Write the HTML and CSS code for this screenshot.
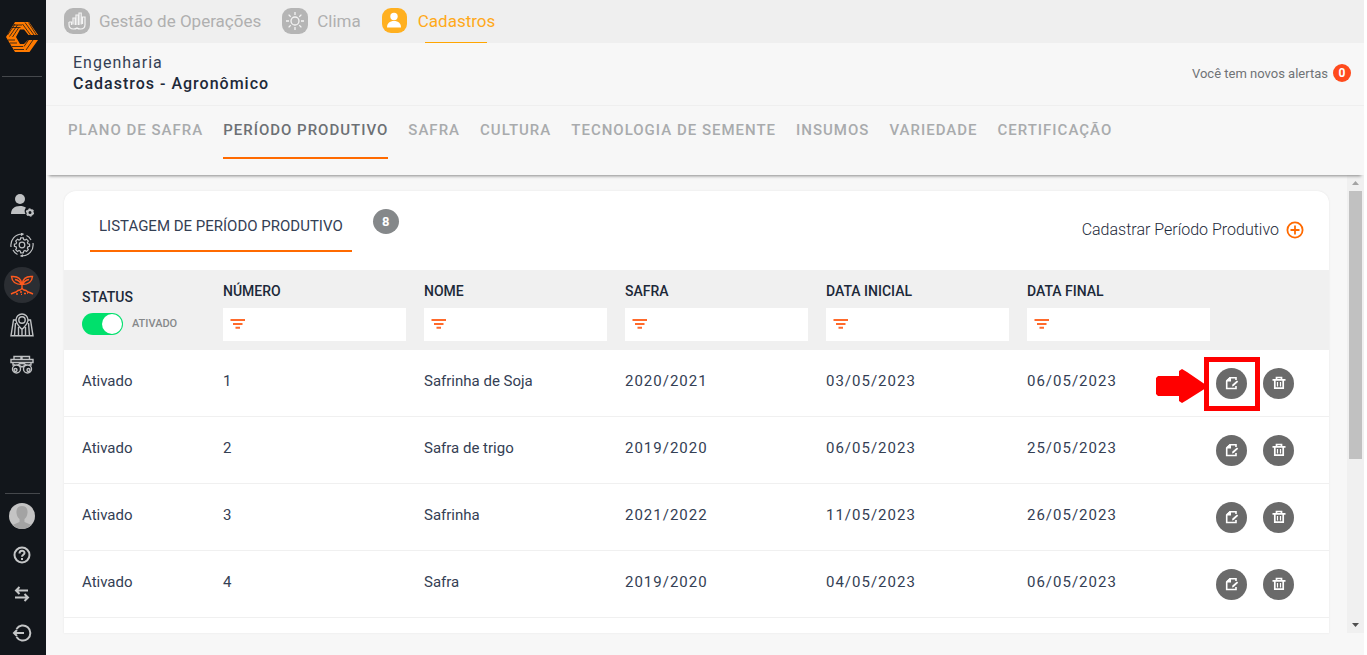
FILE: index.html
```html
<!DOCTYPE html>
<html lang="pt-BR">
<head>
    <meta charset="UTF-8">
    <meta name="viewport" content="width=device-width, initial-scale=1.0">
    <title>Cadastros - Agronômico</title>
    <link rel="stylesheet" href="styles.css">
</head>
<body>
    <!-- icones reutilizados na tabela -->
    <svg class="sprite" aria-hidden="true">
        <symbol id="icon-filter" viewBox="0 0 16 12">
            <path d="M0.500 2h14.500M3 6h9.500M5.500 9.800h4.500" fill="none" stroke="#ff6a2b" stroke-width="2"/>
        </symbol>
        <symbol id="icon-edit" viewBox="0 0 14 14">
            <path d="M11 4V1.700H5L1.700 5v7.500H11V10" fill="none" stroke="#fff" stroke-width="1.600"/>
            <path d="M1.500 5.500V4L5 1h1v4.500z" fill="#fff"/>
            <path d="M7 10.500l.4-2L12 4.500l1.200 1.200-4.500 4.300z" fill="#fff"/>
        </symbol>
        <symbol id="icon-trash" viewBox="0 0 14 14">
            <path d="M0.500 3.800h13M4.500 3.500V1.500h5v2M2.800 4v8.200h8.400V4" fill="none" stroke="#fff" stroke-width="1.700"/>
            <path d="M5.500 6v4.500M8.500 6v4.500" fill="none" stroke="#fff" stroke-width="1.200"/>
        </symbol>
    </svg>
    <div class="app">
        <aside class="sidebar">
            <a href="#" class="logo" aria-label="Início">
                <svg width="32" height="30" viewBox="0 0 32 30">
                    <path d="M9 0h14l9 13h-9.500L18 7.500h-4L10 15l4 7h4l4-4h10l-8.500 12H9L0 15z" fill="#ff7a00"/>
                    <path d="M7 3h9M5.500 5.500h9M19 .5l9 12.500M22.500 .5l8 12.500M16.500 2l8 11M1.500 13l7.500-11M3.500 14.500l8-11.500M6.500 15l6-9M2 18h7M4 21h7M6 24.500h11M8 27.500h10M18 24.500l4.500-6.500M20 28l7-10" fill="none" stroke="#12161b" stroke-width=".8"/>
                </svg>
            </a>
            <nav class="sideMenu">
                <a href="#" aria-label="Usuários">
                    <svg width="24" height="24" viewBox="0 0 24 24" fill="#bfc1c3">
                        <circle cx="10" cy="6" r="5"/>
                        <path d="M1 21c0-5 3-8 9-8 2.500 0 4.500.6 6 1.700-1.500 1.500-2 4-.5 6.300z"/>
                        <circle cx="20" cy="19.500" r="2.500" fill="none" stroke="#bfc1c3" stroke-width="2"/>
                        <circle cx="20" cy="19.500" r="3.600" fill="none" stroke="#bfc1c3" stroke-width="1.200" stroke-dasharray="1.900 1.870"/>
                    </svg>
                </a>
                <a href="#" aria-label="Processos">
                    <svg width="24" height="24" viewBox="0 0 24 24" fill="none" stroke="#bfc1c3" stroke-width="1.200">
                        <circle cx="12" cy="12" r="2.800"/>
                        <path d="M10.700 4.800h2.600l.4 1.700 1.300.6 1.500-.9 1.800 1.800-.9 1.500.5 1.300 1.700.4v2.100l-1.700.5-.5 1.300.9 1.500-1.800 1.800-1.500-.9-1.300.6-.4 1.700h-2.600l-.4-1.700-1.300-.6-1.500.9-1.800-1.800.9-1.500-.5-1.300-1.700-.5v-2.100l1.700-.4.5-1.300-.9-1.500L7.500 6.200l1.500.9 1.300-.6z"/>
                        <path d="M1 14C0 7 5 1 12.500 1M11 .2l2 .9-2 1.300M23 10c1 7-4 13-11.500 13M13 21.700l-2 1.200 2 1M3 17c1 2 2 3.500 4.500 4.500M21 7c-1-2-2-3.500-4.500-4.500"/>
                    </svg>
                </a>
                <a href="#" class="active" aria-label="Agronômico">
                    <svg width="24" height="20" viewBox="0 0 24 20" fill="none" stroke="#ff5a1f" stroke-width="1.400">
                        <path d="M12 14V9C11 3 7 1 1.500 1.500 2 7 5 9.500 12 9.500M12 9c1-6 5-8 10.500-7.500C22 7 19 9.500 12 9.500M5 4.500c3 .5 5 2 7 5 2-3 4-4.500 7-5"/>
                        <path d="M1 19c2-1 3-1.500 5-2l2-1.500 2-.5 2-1.500 2 1.500 2 .5 2 1.500c2 .5 3 1 5 2"/>
                        <path d="M6 19h2M10 17h2M14 18.500h2M17 18h1M11 19.500h1"/>
                    </svg>
                </a>
                <a href="#" aria-label="Mapas">
                    <svg width="24" height="24" viewBox="0 0 24 24" fill="none" stroke="#bfc1c3" stroke-width="1.400">
                        <path d="M5.500 7H3.500L1 22.800h22L20.500 7h-2M12 16.500C8 12.500 6 9.500 6 7a6 6 0 0 1 12 0c0 2.500-2 5.500-6 9.500zM12 17v5.500M8.500 14v8.500M15.500 14v8.500M5.500 10L4.500 22.500M18.500 10l1 12.500"/>
                        <circle cx="12" cy="7" r="3.200"/>
                    </svg>
                </a>
                <a href="#" aria-label="Máquinas">
                    <svg width="24" height="20" viewBox="0 0 24 20" fill="none" stroke="#bfc1c3" stroke-width="1.400">
                        <path d="M4 4V1.500h7V4M12 4V1.500h7.500V4M1 4.500h22v3H1zM3 8v2h2M21 8v2h-2M8 10c1.500-2 6.500-2 8 0l-4 2z"/>
                        <circle cx="6.500" cy="14" r="4"/><circle cx="17.500" cy="14" r="4"/>
                        <circle cx="5.500" cy="15" r="1.500"/><circle cx="18.500" cy="15" r="1.500"/>
                    </svg>
                </a>
            </nav>
            <nav class="sideFooter">
                <a href="#" aria-label="Perfil">
                    <svg width="26" height="26" viewBox="0 0 26 26">
                        <circle cx="13" cy="13" r="13" fill="#c4c4c4"/>
                        <path d="M13 3c-4 0-6 3-5.500 7 .3 3 1.500 5 3 6v3l-7 3c5 5.300 14 5.300 19 0l-7-3v-3c1.500-1 2.700-3 3-6C19 6 17 3 13 3z" fill="#a3a3a3"/>
                    </svg>
                </a>
                <a href="#" aria-label="Ajuda">
                    <svg width="18" height="18" viewBox="0 0 18 18" fill="none" stroke="#c4c6c7" stroke-width="2">
                        <circle cx="9" cy="9" r="7.500"/>
                        <path d="M6.500 7.500C6.500 4 11.500 4 11.500 7c0 1.700-2.500 1.800-2.500 3.700M9 12v2"/>
                    </svg>
                </a>
                <a href="#" aria-label="Trocar">
                    <svg width="16" height="16" viewBox="0 0 16 16" fill="none" stroke="#c4c6c7" stroke-width="2">
                        <path d="M14 4.500H2M5.500 1L2 4.500 5.500 8M1 11.500h13M10.500 8l3.500 3.500-3.500 3.500"/>
                    </svg>
                </a>
                <a href="#" aria-label="Sair">
                    <svg width="20" height="18" viewBox="0 0 20 18" fill="none" stroke="#c4c6c7" stroke-width="2">
                        <path d="M4.500 5a7.500 7.500 0 1 1 0 8M12 9H2M5 6L2 9l3 3"/>
                    </svg>
                </a>
            </nav>
        </aside>

        <div class="page">
            <nav class="topbar">
                <a href="#">
                    <svg width="26" height="26" viewBox="0 0 26 26">
                        <rect width="26" height="26" rx="9" fill="#b5b5b5"/>
                        <path d="M5 14v2.500c0 3 2 4.500 4.500 4.500s3.500-1 3.500-1 1 1 3.500 1 4.500-1.500 4.500-4.500V9h-2.500v7M5 14h2.500v3M9 16.500V10h2.200v7M12 17V7h2.200v10M15 17V5h2.200v11.500" fill="none" stroke="#f4f4f4" stroke-width="1.200"/>
                    </svg>
                    <span>Gestão de Operações</span>
                </a>
                <a href="#">
                    <svg width="26" height="26" viewBox="0 0 26 26">
                        <rect width="26" height="26" rx="9" fill="#b5b5b5"/>
                        <circle cx="13" cy="13" r="4" fill="none" stroke="#f4f4f4" stroke-width="1.300"/>
                        <path d="M13 4v3M13 19v3M4 13h3M19 13h3M6.600 6.600l2.100 2.100M17.300 17.300l2.100 2.100M6.600 19.400l2.100-2.100M17.300 8.700l2.100-2.100" stroke="#f4f4f4" stroke-width="1.300"/>
                    </svg>
                    <span>Clima</span>
                </a>
                <a href="#" class="active">
                    <svg width="25" height="25" viewBox="0 0 25 25">
                        <rect width="25" height="25" rx="9" fill="#ffb020"/>
                        <circle cx="12" cy="8.500" r="3.700" fill="#fff"/>
                        <path d="M5 19.500c0-4 2.500-6.500 7-6.500s7 2.500 7 6.500z" fill="#fff"/>
                    </svg>
                    <span>Cadastros</span>
                </a>
            </nav>

            <header class="header">
                <div>
                    <p class="farm">Engenharia</p>
                    <h1>Cadastros - Agronômico</h1>
                </div>
                <p class="alerts">Você tem novos alertas <b>0</b></p>
            </header>

            <nav class="tabs">
                <a href="#">PLANO DE SAFRA</a>
                <a href="#" class="active">PERÍODO PRODUTIVO</a>
                <a href="#">SAFRA</a>
                <a href="#">CULTURA</a>
                <a href="#">TECNOLOGIA DE SEMENTE</a>
                <a href="#">INSUMOS</a>
                <a href="#">VARIEDADE</a>
                <a href="#">CERTIFICAÇÃO</a>
            </nav>

            <main class="content">
                <section class="card">
                    <div class="cardHeader">
                        <h2>LISTAGEM DE PERÍODO PRODUTIVO</h2>
                        <span class="count">8</span>
                        <a href="#" class="add">
                            Cadastrar Período Produtivo
                            <svg width="18" height="18" viewBox="0 0 18 18" fill="none" stroke="#ff6a00" stroke-width="1.800">
                                <circle cx="9" cy="9" r="7.600"/>
                                <path d="M9 4.500v9M4.500 9h9"/>
                            </svg>
                        </a>
                    </div>
                    <table>
                        <thead>
                            <tr>
                                <th class="colStatus">
                                    <span>STATUS</span>
                                    <label class="switch"><input type="checkbox" checked>ATIVADO</label>
                                </th>
                                <th>
                                    <label for="fNumero">NÚMERO</label>
                                    <div class="filter"><svg width="16" height="12"><use href="#icon-filter"/></svg><input type="text" id="fNumero"></div>
                                </th>
                                <th>
                                    <label for="fNome">NOME</label>
                                    <div class="filter"><svg width="16" height="12"><use href="#icon-filter"/></svg><input type="text" id="fNome"></div>
                                </th>
                                <th>
                                    <label for="fSafra">SAFRA</label>
                                    <div class="filter"><svg width="16" height="12"><use href="#icon-filter"/></svg><input type="text" id="fSafra"></div>
                                </th>
                                <th>
                                    <label for="fInicial">DATA INICIAL</label>
                                    <div class="filter"><svg width="16" height="12"><use href="#icon-filter"/></svg><input type="text" id="fInicial"></div>
                                </th>
                                <th>
                                    <label for="fFinal">DATA FINAL</label>
                                    <div class="filter"><svg width="16" height="12"><use href="#icon-filter"/></svg><input type="text" id="fFinal"></div>
                                </th>
                                <th class="colActions"></th>
                            </tr>
                        </thead>
                        <tbody>
                            <tr>
                                <td>Ativado</td>
                                <td>1</td>
                                <td>Safrinha de Soja</td>
                                <td class="num">2020/2021</td>
                                <td class="num">03/05/2023</td>
                                <td class="num">06/05/2023</td>
                                <td class="colActions">
                                    <div class="actions">
                                        <button type="button" aria-label="Editar"><svg width="14" height="14"><use href="#icon-edit"/></svg></button>
                                        <button type="button" aria-label="Excluir"><svg width="14" height="14"><use href="#icon-trash"/></svg></button>
                                        <div class="highlight">
                                            <svg width="50" height="34" viewBox="0 0 50 34"><path d="M2 7h21V2l3-2 5 3 19 13v3L31 31l-5 3-3-2v-5H2l-2-2V9z" fill="#f00"/></svg>
                                            <span></span>
                                        </div>
                                    </div>
                                </td>
                            </tr>
                            <tr>
                                <td>Ativado</td>
                                <td>2</td>
                                <td>Safra de trigo</td>
                                <td class="num">2019/2020</td>
                                <td class="num">06/05/2023</td>
                                <td class="num">25/05/2023</td>
                                <td class="colActions">
                                    <div class="actions">
                                        <button type="button" aria-label="Editar"><svg width="14" height="14"><use href="#icon-edit"/></svg></button>
                                        <button type="button" aria-label="Excluir"><svg width="14" height="14"><use href="#icon-trash"/></svg></button>
                                    </div>
                                </td>
                            </tr>
                            <tr>
                                <td>Ativado</td>
                                <td>3</td>
                                <td>Safrinha</td>
                                <td class="num">2021/2022</td>
                                <td class="num">11/05/2023</td>
                                <td class="num">26/05/2023</td>
                                <td class="colActions">
                                    <div class="actions">
                                        <button type="button" aria-label="Editar"><svg width="14" height="14"><use href="#icon-edit"/></svg></button>
                                        <button type="button" aria-label="Excluir"><svg width="14" height="14"><use href="#icon-trash"/></svg></button>
                                    </div>
                                </td>
                            </tr>
                            <tr>
                                <td>Ativado</td>
                                <td>4</td>
                                <td>Safra</td>
                                <td class="num">2019/2020</td>
                                <td class="num">04/05/2023</td>
                                <td class="num">06/05/2023</td>
                                <td class="colActions">
                                    <div class="actions">
                                        <button type="button" aria-label="Editar"><svg width="14" height="14"><use href="#icon-edit"/></svg></button>
                                        <button type="button" aria-label="Excluir"><svg width="14" height="14"><use href="#icon-trash"/></svg></button>
                                    </div>
                                </td>
                            </tr>
                        </tbody>
                    </table>
                </section>
                <div class="scrollbar">
                    <svg width="7" height="4" viewBox="0 0 7 4"><path d="M0 4l3.500-4L7 4z" fill="#a3a3a3"/></svg>
                    <div class="thumb"></div>
                    <svg width="7" height="4" viewBox="0 0 7 4"><path d="M0 0l3.500 4L7 0z" fill="#505050"/></svg>
                </div>
            </main>
        </div>
    </div>
</body>
</html>
```
FILE: styles.css
```css
*{box-sizing: border-box;}
body{margin: 0; font-family: Roboto, "Liberation Sans", sans-serif; color: #1d2939; background-color: #fff;}
h1,h2,p{margin: 0;}
a{color: inherit; text-decoration: none;}
svg{display: block; flex: none;}
.sprite{display: none;}
.app{display: flex; height: 100vh; padding-right: 3px; overflow: hidden;}

/* menu lateral */
.sidebar{display: flex; flex-direction: column; align-items: center; justify-content: space-between; width: 46px; flex: none; padding-right: 2px; background-color: #12161b;}
.logo{display: flex; justify-content: center; width: 40px; height: 77px; padding-top: 22px; border-bottom: 1px solid #45484c;}
.sideMenu{display: flex; flex-direction: column; align-items: center; gap: 4px;}
.sideMenu a{display: flex; align-items: center; justify-content: center; width: 36px; height: 36px; border-radius: 50%;}
.sideMenu .active{background-color: #2b2e33;}
.sideFooter{display: flex; flex-direction: column; align-items: center; gap: 13px; width: 35px; padding: 9px 0; border-top: 1px solid #45484c;}
.sideFooter a{display: flex; align-items: center; justify-content: center; height: 26px;}

.page{display: flex; flex-direction: column; flex: 1; min-width: 0; background-color: #f7f7f7;}

.topbar{display: flex; gap: 21px; height: 43px; flex: none; padding: 0 18px; background-color: #efefef; font-size: 17px; color: #b0b0b0;}
.topbar a{display: flex; align-items: center; gap: 9px; height: 41px;}
.topbar .active{position: relative; color: #ffa91a; gap: 11px;}
.topbar .active::after{content: ""; position: absolute; right: 8px; bottom: -2px; width: 62px; height: 1px; background-color: #ffa500;}

.header{display: flex; align-items: center; justify-content: space-between; height: 63px; flex: none; padding: 0 13px 2px 27px; border-bottom: 1px solid #efefef;}
.farm{font-size: 16px; line-height: 21px; letter-spacing: 1px; color: #344054;}
.header h1{font-size: 16px; line-height: 21px; font-weight: 500; letter-spacing: 1px;}
.alerts{display: flex; align-items: center; gap: 5px; font-size: 13px; color: #707376;}
.alerts b{width: 18px; border-radius: 50%; background-color: #ff4a1c; color: #fff; font-size: 12px; line-height: 18px; text-align: center;}

.tabs{display: flex; gap: 20px; height: 69px; flex: none; padding: 0 22px; box-shadow: 0 4px 3px -3px #888; font-size: 15px; font-weight: 500; letter-spacing: 1px; color: #a9abad; z-index: 1;}
.tabs a{height: 53px; line-height: 48px; white-space: nowrap;}
.tabs .active{color: #6c7074; border-bottom: 2px solid #ff6a00;}

.content{display: flex; flex: 1; min-height: 0; margin-bottom: 22px;}
.card{flex: 1; margin: 16px 18px 0; overflow: hidden; background-color: #fff; border-radius: 12px 12px 0 0; box-shadow: 0 0 2px #e4e4e4;}
.cardHeader{display: flex; align-items: flex-start; height: 79px; padding: 18px 25px 0 26px;}
.cardHeader h2{height: 43px; padding: 0 9px; border-bottom: 2px solid #ff6a00; font-size: 15px; font-weight: 400; line-height: 34px; color: #344054;}
.count{width: 26px; margin-left: 21px; border-radius: 50%; background-color: #85888a; color: #fff; font-size: 13px; font-weight: 700; line-height: 25px; text-align: center;}
.add{display: flex; align-items: center; gap: 7px; margin-left: auto; font-size: 16px; font-weight: 300; line-height: 41px;}

table{width: 100%; table-layout: fixed; border-collapse: separate; border-spacing: 0;}
th,td{padding: 0 0 0 18px; text-align: left;}
thead{background-color: #f0f0f0;}
th{height: 80px; padding-top: 10px; vertical-align: top; font-size: 14px; font-weight: 500; line-height: 22px;}
th>label{display: block;}
.colStatus{width: 141px; padding-top: 16px;}
.colActions{width: 119px; padding-left: 6px;}
.filter{display: flex; align-items: center; height: 33px; margin-top: 6px; padding: 0 0 2px 7px; background-color: #fff;}
.filter input{flex: 1; min-width: 0; height: 100%; border: 0; background: none; outline: none;}
.switch{display: flex; align-items: center; gap: 9px; margin-top: 5px; font-size: 11px; color: #85888a;}
.switch input{appearance: none; display: flex; justify-content: flex-end; width: 41px; height: 22px; margin: 0; padding: 1px; border-radius: 11px; background-color: #00e06c;}
.switch input::before{content: ""; width: 20px; height: 20px; border-radius: 50%; background-color: #fff;}
td{height: 67px; padding-bottom: 4px; border-bottom: 1px solid #f0f0f0; font-size: 15px; color: #344054;}
.num{letter-spacing: 1px;}
td.colActions{padding-bottom: 0;}
.actions{position: relative; display: flex; gap: 16px;}
.actions button{display: flex; align-items: center; justify-content: center; width: 31px; height: 31px; padding: 0; border: 0; border-radius: 50%; background-color: #6a6a6a;}
/* destaque do botao editar */
.highlight{position: absolute; left: -60px; top: -11px; display: flex; align-items: center;}
.highlight svg{margin: 4px -2px 0 0;}
.highlight span{width: 56px; height: 54px; border: 5px solid #f00;}

.scrollbar{display: flex; flex-direction: column; align-items: center; justify-content: space-between; width: 17px; padding: 6px 0; background-color: #f0f0f0;}
.thumb{width: 13px; height: 60%; margin-bottom: auto; margin-top: 6px; background-color: #c1c1c1;}
```
